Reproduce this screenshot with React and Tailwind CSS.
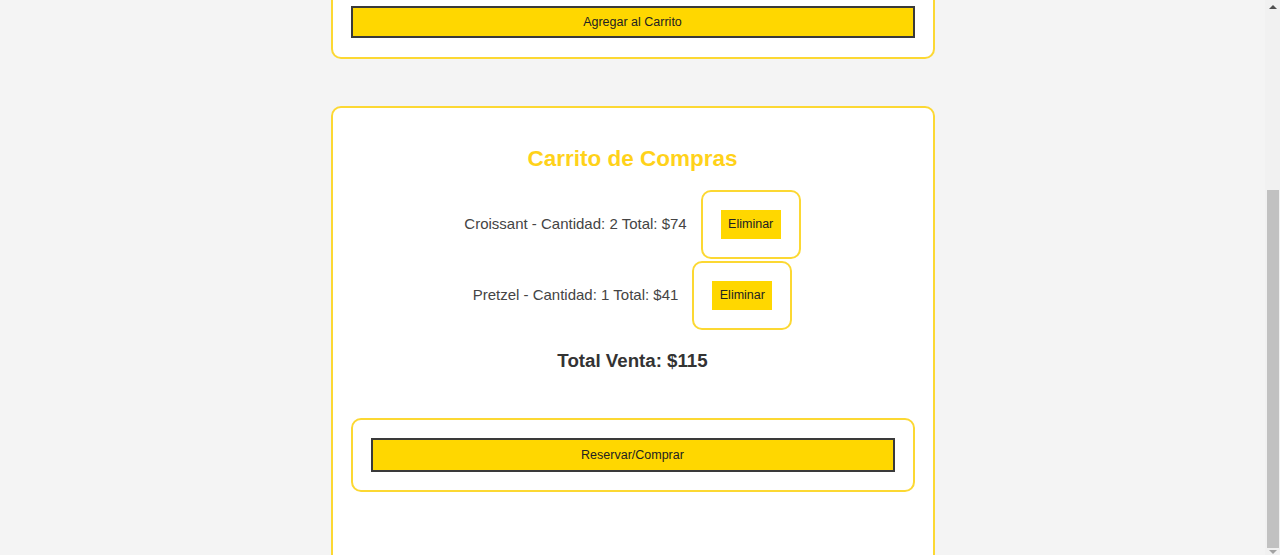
import React from "react";

const cart = [
  { id: 1, name: "Croissant", qty: 2, total: 74 },
  { id: 2, name: "Pretzel", qty: 1, total: 41 },
];

const App = () => {
  const totalVenta = cart.reduce((acc, item) => acc + item.total, 0);

  return (
    <div
      className="h-[555px] w-full flex overflow-hidden bg-[#f4f4f4]"
      style={{ fontFamily: '"Liberation Sans", Arial, sans-serif' }}
    >
      {/* page */}
      <div className="flex-1 flex flex-col items-center">
        {/* product card (scrolled, only bottom visible) */}
        <div className="w-[604px] shrink-0 bg-white border-2 border-t-0 border-[#fcd833] rounded-b-[10px] px-[18px] pt-[6px] pb-[19px]">
          <button className="w-full h-[32px] bg-[#ffd700] border-2 border-[#3a3a3a] text-[12.5px] text-[#222]">
            Agregar al Carrito
          </button>
        </div>

        {/* cart */}
        <div className="w-[604px] shrink-0 mt-[47px] bg-white border-2 border-[#fcd833] rounded-[10px] px-[18px] pt-[38px] pb-[80px]">
          <h2 className="text-[22.5px] leading-[26px] font-bold text-[#ffd21a] text-center">
            Carrito de Compras
          </h2>

          <ul className="mt-[18px] flex flex-col gap-[2px]">
            {cart.map((item) => (
              <li key={item.id} className="flex justify-center items-center">
                <span className="text-[15px] text-[#444]">
                  {item.name} - Cantidad: {item.qty} Total: ${item.total}
                </span>
                <div className="ml-[14px] border-2 border-[#fcd833] rounded-[10px] p-[18px]">
                  <button className="w-[60px] h-[29px] bg-[#ffd700] text-[12.5px] text-[#222]">
                    Eliminar
                  </button>
                </div>
              </li>
            ))}
          </ul>

          <p className="mt-[19px] text-[18.7px] leading-[24px] font-bold text-[#333] text-center">
            Total Venta: ${totalVenta}
          </p>

          <div className="mt-[45px] border-2 border-[#fcd833] rounded-[10px] p-[18px]">
            <button className="w-full h-[34px] bg-[#ffd700] border-2 border-[#3a3a3a] text-[12.5px] text-[#222]">
              Reservar/Comprar
            </button>
          </div>
        </div>
      </div>

      {/* scrollbar */}
      <div className="w-[15px] shrink-0 bg-[#f1f1f1] flex flex-col items-center">
        <div className="h-[14px] flex items-center justify-center">
          <div className="w-0 h-0 border-l-[4px] border-r-[4px] border-b-[4px] border-l-transparent border-r-transparent border-b-[#505050]" />
        </div>
        <div className="mt-[176px] w-[12px] h-[358px] bg-[#c1c1c1]" />
        <div className="h-[7px] flex items-center justify-center">
          <div className="w-0 h-0 border-l-[4px] border-r-[4px] border-t-[4px] border-l-transparent border-r-transparent border-t-[#a3a3a3]" />
        </div>
      </div>
    </div>
  );
};

export default App;
